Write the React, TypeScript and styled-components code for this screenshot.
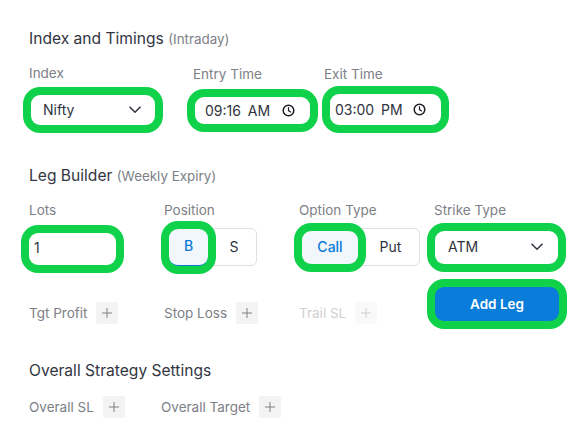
import React from "react";
import styled, { createGlobalStyle } from "styled-components";

const Global = createGlobalStyle`
  html, body { margin: 0; padding: 0; background: #fff; }
  body { font-family: Inter, "Liberation Sans", sans-serif; color: #2b2f3a; }
`;

const Page = styled.div`
  width: 583px;
  height: 448px;
  box-sizing: border-box;
  padding: 29px 0 0 29px;
  overflow: hidden;
`;

const Title = styled.h2`
  margin: 0;
  font-size: 15.6px;
  line-height: 20px;
  font-weight: 400;
  color: #33363f;
`;

const Sub = styled.span`
  font-size: 13.4px;
  color: #7c7f87;
`;

const Label = styled.div`
  font-size: 13.5px;
  line-height: 16px;
  color: #7d8087;
`;

const TopRow = styled.div`
  display: flex;
  margin-top: 16px;
  height: 62px;
`;

const TopField = styled.div<{ $w: number; $dy: number }>`
  width: ${(p) => p.$w}px;
  padding-top: ${(p) => p.$dy}px;
`;

const Ring = styled.div<{ $w: number; $h: number; $mt: number; $ml: number; $pad: number; $pr?: number; $pb?: number }>`
  box-sizing: border-box;
  width: ${(p) => p.$w}px;
  height: ${(p) => p.$h}px;
  margin: ${(p) => p.$mt}px 0 0 ${(p) => p.$ml}px;
  padding: 0 ${(p) => p.$pr ?? p.$pad}px ${(p) => p.$pb ?? 2}px ${(p) => p.$pad}px;
  display: flex;
  align-items: center;
  justify-content: space-between;
  border-radius: 9px;
  background: #fff;
  box-shadow: 0 0 0 8px #10d24a;
  font-size: 14px;
  color: #2f3340;
`;

const TimeText = styled.span`
  font-size: 14px;
  word-spacing: 3px;
  color: #2f3340;
`;

const LegRow = styled.div`
  display: grid;
  grid-template-columns: repeat(4, 135px);
  margin-top: 16px;
  height: 64px;
`;

const Segments = styled.div<{ $w: number }>`
  box-sizing: border-box;
  display: flex;
  align-items: center;
  width: ${(p) => p.$w}px;
  height: 38px;
  margin-top: 10px;
  border: 1px solid #dedfe2;
  border-radius: 6px;
  background: #fff;
`;

const ActiveSegment = styled.div<{ $w: number; $h: number; $ml: number; $line?: boolean }>`
  box-sizing: border-box;
  flex: none;
  width: ${(p) => p.$w}px;
  height: ${(p) => p.$h}px;
  margin-left: ${(p) => p.$ml}px;
  padding-bottom: 2px;
  display: flex;
  align-items: center;
  justify-content: center;
  border-radius: 9px;
  background: #f1f7fc;
  color: #0b7bd8;
  font-size: 14px;
  font-weight: 500;
  border-bottom: ${(p) => (p.$line ? "1px solid #0b7bd8" : "none")};
  box-shadow: 0 0 0 8px #10d24a;
`;

const Segment = styled.div`
  flex: 1;
  padding: 0 0 2px 4px;
  text-align: center;
  font-size: 14px;
  color: #2f3340;
`;

const AddonRow = styled.div`
  display: grid;
  grid-template-columns: repeat(3, 135px) 1fr;
  align-items: end;
  margin-top: 21px;
  height: 37px;
`;

const AddonItem = styled.div<{ $off?: boolean }>`
  display: flex;
  align-items: center;
  gap: 9px;
  font-size: 13.5px;
  color: ${(p) => (p.$off ? "#cfd0d3" : "#7d8087")};
`;

const PlusBox = styled.span<{ $off?: boolean }>`
  width: 22px;
  height: 22px;
  display: inline-flex;
  align-items: center;
  justify-content: center;
  border-radius: 2px;
  background: ${(p) => (p.$off ? "#f9f9f9" : "#f3f3f3")};
  color: ${(p) => (p.$off ? "#cfd0d3" : "#808080")};
`;

const AddLeg = styled.button`
  box-sizing: border-box;
  align-self: start;
  width: 124px;
  height: 34px;
  margin-left: 1px;
  border: 0;
  border-radius: 9px;
  background: #0a7cda;
  color: #fff;
  font-family: inherit;
  font-size: 13.5px;
  font-weight: 600;
  box-shadow: 0 0 0 8px #10d24a;
`;

const LowerTitle = styled(Title)<{ $mt: number }>`
  margin-top: ${(p) => p.$mt}px;
`;

const OverallRow = styled.div`
  display: flex;
  align-items: center;
  margin-top: 15px;
`;

const OverallItem = styled(AddonItem)<{ $w?: number }>`
  width: ${(p) => (p.$w ? `${p.$w}px` : "auto")};
`;

const Plus = () => (
  <svg width="10" height="10" viewBox="0 0 10 10" fill="none" stroke="currentColor" strokeWidth="1">
    <path d="M5 0v10M0 5h10" />
  </svg>
);

const Chevron = () => (
  <svg width="14" height="7" viewBox="0 0 14 7" fill="none" stroke="#2f3340" strokeWidth="1.5">
    <path d="M.5.7l5.5 5.5L11.5.7" />
  </svg>
);

const Clock = () => (
  <svg width="13" height="13" viewBox="0 0 13 13" fill="none" stroke="#1d1f24" strokeWidth="1.5">
    <circle cx="6.5" cy="6.5" r="5.3" />
    <path d="M6.5 3.2v3.4l2.4 1.6" strokeWidth="1.2" />
  </svg>
);

export default function App() {
  return (
    <Page>
      <Global />
      <Title>
        Index and Timings <Sub>(Intraday)</Sub>
      </Title>
      <TopRow>
        <TopField $w={164} $dy={0}>
          <Label>Index</Label>
          <Ring $w={124} $h={30} $mt={14} $ml={2} $pad={12}>
            Nifty
            <Chevron />
          </Ring>
        </TopField>
        <TopField $w={131} $dy={1}>
          <Label>Entry Time</Label>
          <Ring $w={115} $h={27} $mt={15} $ml={2} $pad={10} $pr={15} $pb={0}>
            <TimeText>09:16 AM</TimeText>
            <Clock />
          </Ring>
        </TopField>
        <TopField $w={131} $dy={1}>
          <Label>Exit Time</Label>
          <Ring $w={111} $h={31} $mt={12} $ml={6} $pad={5} $pr={15} $pb={0}>
            <TimeText>03:00 PM</TimeText>
            <Clock />
          </Ring>
        </TopField>
      </TopRow>

      <LowerTitle $mt={39}>
        Leg Builder <Sub>(Weekly Expiry)</Sub>
      </LowerTitle>
      <LegRow>
        <div>
          <Label>Lots</Label>
          <Ring $w={87} $h={32} $mt={15} $ml={0} $pad={5} $pb={3}>
            1
          </Ring>
        </div>
        <div>
          <Label>Position</Label>
          <Segments $w={93}>
            <ActiveSegment $w={39} $h={37} $ml={4} $line>
              B
            </ActiveSegment>
            <Segment>S</Segment>
          </Segments>
        </div>
        <div>
          <Label>Option Type</Label>
          <Segments $w={121}>
            <ActiveSegment $w={56} $h={33} $ml={2}>
              Call
            </ActiveSegment>
            <Segment>Put</Segment>
          </Segments>
        </div>
        <div>
          <Label>Strike Type</Label>
          <Ring $w={123} $h={33} $mt={13} $ml={1} $pad={13}>
            ATM
            <Chevron />
          </Ring>
        </div>
      </LegRow>
      <AddonRow>
        <AddonItem>
          Tgt Profit
          <PlusBox>
            <Plus />
          </PlusBox>
        </AddonItem>
        <AddonItem>
          Stop Loss
          <PlusBox>
            <Plus />
          </PlusBox>
        </AddonItem>
        <AddonItem $off>
          Trail SL
          <PlusBox $off>
            <Plus />
          </PlusBox>
        </AddonItem>
        <AddLeg>Add Leg</AddLeg>
      </AddonRow>

      <LowerTitle $mt={37}>Overall Strategy Settings</LowerTitle>
      <OverallRow>
        <OverallItem $w={132}>
          Overall SL
          <PlusBox>
            <Plus />
          </PlusBox>
        </OverallItem>
        <OverallItem>
          Overall Target
          <PlusBox>
            <Plus />
          </PlusBox>
        </OverallItem>
      </OverallRow>
    </Page>
  );
}
